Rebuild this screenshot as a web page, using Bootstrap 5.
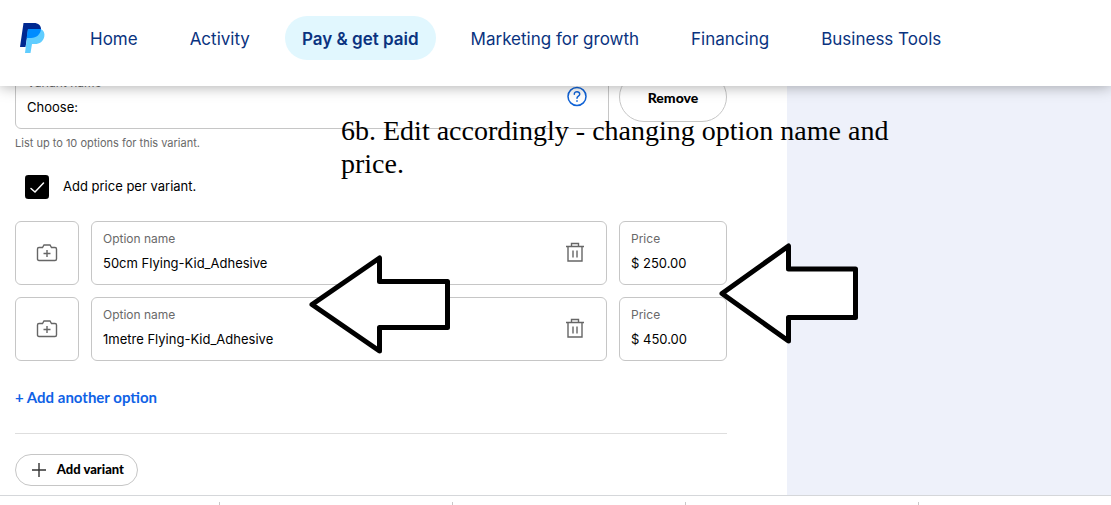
<!DOCTYPE html>
<html lang="en">
<head>
<meta charset="utf-8">
<meta name="viewport" content="width=device-width, initial-scale=1">
<title>Edit variants</title>
<link href="https://cdn.jsdelivr.net/npm/bootstrap@5.3.0/dist/css/bootstrap.min.css" rel="stylesheet">
<style>
  :root { --line: #c6c6c6; --ink: #545d68; --brand: #0a3380; --action: #0f62e6; }
  body { font-family: Inter, "Liberation Sans", sans-serif; font-size: 13px; color: #000; background: #fff; }
  .topbar { height: 86px; padding: 0 20px 10px; z-index: 3; box-shadow: 0 0 14px rgba(0, 0, 0, .36); clip-path: inset(0 0 -20px 0); }
  .topbar .nav { gap: 18px; margin-left: 28px; }
  .topbar .nav-link { color: var(--brand); font-size: 17px; line-height: 24px; padding: 11px 17px 9px; border-radius: 22px; white-space: nowrap; }
  .topbar .nav-link.active { background: #e1f7fe; font-weight: 600; }
  .editor { padding: 0 60px 8px 15px; margin-top: -21px; }
  .preview { width: 324px; background: #eef1fa; }
  .field { height: 64px; border: 1px solid var(--line); border-radius: 6px; padding: 0 11px 2px; background: #fff; }
  .field label { display: block; font-size: 12px; line-height: 16px; color: #696969; }
  .field input { display: block; width: 100%; border: 0; margin-top: 6px; padding: 0; line-height: 20px; height: 20px; background: none; outline-offset: 2px; color: #000; }
  .square { width: 64px; height: 64px; border: 1px solid var(--line); border-radius: 6px; background: #fff; padding: 0; }
  .price { width: 108px; }
  .pill { font-family: Lato, sans-serif; font-weight: 900; border: 1px solid var(--line); background: #fff; color: #000; }
  .remove { width: 108px; height: 50px; border-radius: 25px; font-size: 14px; }
  .addvariant { width: 123px; height: 32px; border-radius: 16px; font-size: 13px; padding: 0 13px 0 16px; }
  .plain { border: 0; padding: 0; background: none; line-height: 0; }
  .hint { font-size: 11px; line-height: 16px; color: #696969; margin-top: 6px; }
  .tick { height: 24px; margin: 24px 0 22px; padding-left: 10px; gap: 14px; }
  .tick input { width: 24px; height: 24px; margin: 0; border: 0; border-radius: 4px; }
  .tick input:checked[type=checkbox] { background-color: #000; background-image: url("data:image/svg+xml,%3csvg xmlns='http://www.w3.org/2000/svg' viewBox='0 0 24 24'%3e%3cpath fill='none' stroke='%23fff' stroke-width='1.500' stroke-linecap='round' d='M6 13.500 10 17 18.500 8'/%3e%3c/svg%3e"); }
  .more { font-family: Lato, sans-serif; font-weight: 700; font-size: 15px; line-height: 20px; color: var(--action); text-decoration: none; margin-top: 26px; }
  .rule { height: 1px; background: #dedede; margin: 26px 0 20px; }
  .bottombar { height: 10px; border-top: 1px solid #d5d7da; display: grid; grid-template-columns: 220fr 233fr 233fr 233fr 192fr; padding-top: 6px; }
  .bottombar span + span { border-left: 1px solid #c8c8c8; }
  .bottombar span { margin-left: -1px; }
  .note { position: absolute; left: 341px; top: 28px; width: 570px; z-index: 2; font: 28px/33px "Liberation Serif", serif; }
  .arrow { position: absolute; z-index: 2; }
  .arrow-name { left: 308px; top: 169px; }
  .arrow-price { left: 718px; top: 157px; }
</style>
</head>
<body class="d-flex flex-column min-vh-100">
<header class="topbar bg-white d-flex align-items-center position-relative">
  <a href="#" aria-label="PayPal home" class="d-block lh-1"><svg width="25" height="30" viewBox="0 0 25 30" class="d-block"><path fill="#002991" d="M3.500 0H14c4 0 7.500 2.500 7 6.700C20.500 11 16 15 11 15H7L5.500 24H0z"/><path fill="#60cdff" d="M8 6h12.700c3 1.500 4.300 4.300 3.600 7.500C23.400 18.500 19.500 21 15 21h-3l-1.500 9H5z"/><path fill="#008cff" d="M8 6h13C20.700 11 16.500 15 11 15H6.600z"/></svg></a>
  <nav class="nav flex-nowrap" aria-label="Main">
    <a class="nav-link" href="#">Home</a><a class="nav-link" href="#">Activity</a><a class="nav-link active" aria-current="page" href="#">Pay &amp; get paid</a><a class="nav-link" href="#">Marketing for growth</a><a class="nav-link" href="#">Financing</a><a class="nav-link" href="#">Business Tools</a>
  </nav>
</header>
<main class="d-flex flex-grow-1 position-relative">
  <form class="editor flex-grow-1">
    <div class="d-flex align-items-center" style="gap:10px">
      <div class="field d-flex align-items-center flex-grow-1">
        <div class="flex-grow-1"><label for="variant">Variant name</label><input id="variant" value="Choose:"></div>
        <button type="button" class="plain me-2" aria-label="Help"><svg width="24" height="24" viewBox="0 0 24 24" fill="none" stroke="#0f62d6" stroke-width="1.500"><circle cx="12" cy="12.500" r="9"/><path d="M9.300 10.300c0-3.600 5.500-3.400 5.400-.1 0 2-2.700 2-2.700 4.100" stroke-linecap="round"/><circle cx="12" cy="17" r=".5" fill="#0f62d6" stroke-width=".8"/></svg></button>
      </div>
      <button type="button" class="pill remove">Remove</button>
    </div>
    <div class="hint">List up to 10 options for this variant.</div>
    <div class="tick d-flex align-items-center"><input class="form-check-input" type="checkbox" id="perprice" checked><label for="perprice">Add price per variant.</label></div>
    <div class="d-flex flex-column" style="gap:12px">
      <div class="d-flex" style="gap:12px">
        <button type="button" class="square" aria-label="Add photo"><svg width="22" height="20" viewBox="0 0 22 20" fill="none" stroke="#666" stroke-width="1.400"><path d="M3 4.500h3.500L8 2h6l1.500 2.500H19q1.500 0 1.500 1.500v10q0 1.500-1.500 1.500H3Q1.500 17.500 1.500 16V6Q1.500 4.500 3 4.500zM11 7v7M7.500 10.500h7"/></svg></button>
        <div class="field d-flex align-items-center flex-grow-1">
          <div class="flex-grow-1"><label for="o1">Option name</label><input id="o1" value="50cm Flying-Kid_Adhesive"></div>
          <button type="button" class="plain me-2" aria-label="Delete option"><svg width="24" height="24" viewBox="0 0 24 24" fill="none" stroke="#666" stroke-width="1.400"><path d="M3 6.500h18M5 6.500v14.500h14V6.500M8.500 6V3.500h7V6M10 10.500v7M14 10.500v7"/></svg></button>
        </div>
        <div class="field price d-flex align-items-center"><div><label for="p1">Price</label><input id="p1" value="$ 250.00"></div></div>
      </div>
      <div class="d-flex" style="gap:12px">
        <button type="button" class="square" aria-label="Add photo"><svg width="22" height="20" viewBox="0 0 22 20" fill="none" stroke="#666" stroke-width="1.400"><path d="M3 4.500h3.500L8 2h6l1.500 2.500H19q1.500 0 1.500 1.500v10q0 1.500-1.500 1.500H3Q1.500 17.500 1.500 16V6Q1.500 4.500 3 4.500zM11 7v7M7.500 10.500h7"/></svg></button>
        <div class="field d-flex align-items-center flex-grow-1">
          <div class="flex-grow-1"><label for="o2">Option name</label><input id="o2" value="1metre Flying-Kid_Adhesive"></div>
          <button type="button" class="plain me-2" aria-label="Delete option"><svg width="24" height="24" viewBox="0 0 24 24" fill="none" stroke="#666" stroke-width="1.400"><path d="M3 6.500h18M5 6.500v14.500h14V6.500M8.500 6V3.500h7V6M10 10.500v7M14 10.500v7"/></svg></button>
        </div>
        <div class="field price d-flex align-items-center"><div><label for="p2">Price</label><input id="p2" value="$ 450.00"></div></div>
      </div>
    </div>
    <a href="#" class="more d-table">+ Add another option</a>
    <div class="rule"></div>
    <button type="button" class="pill addvariant d-flex align-items-center justify-content-between"><svg width="14" height="14" viewBox="0 0 14 14" stroke="#333" stroke-width="1.400"><path d="M7 0v14M0 7h14"/></svg>Add variant</button>
  </form>
  <aside class="preview flex-shrink-0"></aside>
  <div class="note">6b. Edit accordingly - changing option name and price.</div>
  <svg class="arrow arrow-name" width="144" height="101" viewBox="0 0 144 101"><path d="M4 49.500 71.500 3v23.500h68v46h-68V96z" fill="#fff" stroke="#000" stroke-width="5" stroke-linejoin="round"/></svg>
  <svg class="arrow arrow-price" width="144" height="101" viewBox="0 0 144 101"><path d="M4 50.500 70.500 3v23h67v48.500h-67V98z" fill="#fff" stroke="#000" stroke-width="5" stroke-linejoin="round"/></svg>
</main>
<footer class="bottombar bg-white"><span></span><span></span><span></span><span></span><span></span></footer>
<script src="https://cdn.jsdelivr.net/npm/bootstrap@5.3.0/dist/js/bootstrap.bundle.min.js"></script>
</body>
</html>
